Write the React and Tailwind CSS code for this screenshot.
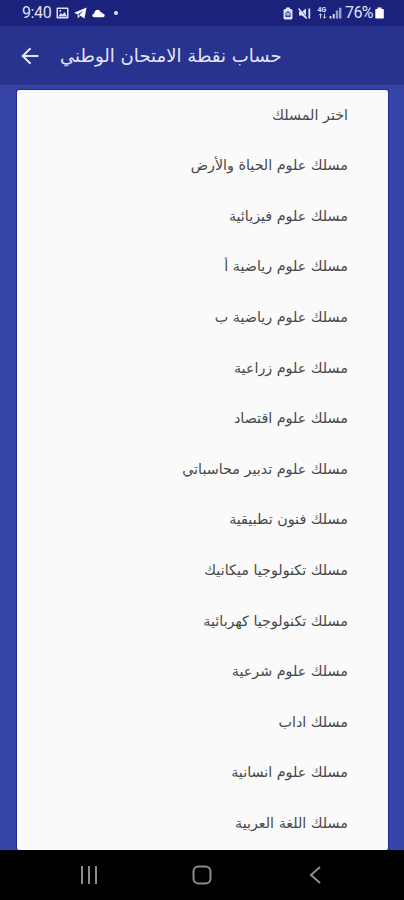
const TRACKS = [
  "اختر المسلك",
  "مسلك علوم الحياة والأرض",
  "مسلك علوم فيزيائية",
  "مسلك علوم رياضية أ",
  "مسلك علوم رياضية ب",
  "مسلك علوم زراعية",
  "مسلك علوم اقتصاد",
  "مسلك علوم تدبير محاسباتي",
  "مسلك فنون تطبيقية",
  "مسلك تكنولوجيا ميكانيك",
  "مسلك تكنولوجيا كهربائية",
  "مسلك علوم شرعية",
  "مسلك اداب",
  "مسلك علوم انسانية",
  "مسلك اللغة العربية",
];

function StatusBar() {
  return (
    <div className="flex h-[26px] shrink-0 items-center bg-[#1a227c] pl-[22px] pr-[20px] font-[Roboto,sans-serif] text-[#dfe2f5]">
      <span className="w-[34px] text-[16px] leading-[26px] tracking-[-0.4px]">9:40</span>
      <svg className="h-[12px] w-[13px]" viewBox="0 0 13 12">
        <path fillRule="evenodd" fill="currentColor" d="M1.5 0.5h10q1 0 1 1v9q0 1-1 1h-10q-1 0-1-1v-9q0-1 1-1zM2 2v8h9V2z" />
        <path d="M2.2 9.4 4.8 6l1.7 1.6 2-2.5 2.5 4.3zM3.5 3.1h1.6v1.6H3.5z" fill="currentColor" />
      </svg>
      <svg className="ml-[5px] h-[12px] w-[13px]" viewBox="0 0 13 12">
        <path d="M12.6 0.6 0.2 5.8l3.5 1.7L9.8 3.4 5.2 8l5.2 3.5z" fill="#fff" />
        <path d="M3.7 7.2v4L6 8.9" fill="#fff" />
      </svg>
      <svg className="ml-[5px] h-[9px] w-[13px]" viewBox="0 0 13 9">
        <path d="M2.4 8.2Q.2 8.2.2 6.4q0-1.7 2-2Q2.8.8 5.6.8q2.3 0 3 2.4 1.5-.1 1.9 1.3 2.2.1 2.2 1.9T10.8 8.2z" fill="#fff" />
      </svg>
      <span className="ml-[9px] h-1 w-1 rounded-full bg-[#dfe2f5]" />

      <svg className="ml-auto h-[13px] w-[10px]" viewBox="0 0 10 13">
        <path fillRule="evenodd" d="M3 .5h4V2h1q1.5 0 1.5 1.5V11q0 1.500-1.500 1.500H2Q.5 12.500.5 11V3.500Q.5 2 2 2h1zM5 4 2.500 6.200v3.900h5V6.200z" fill="currentColor" />
        <path d="M3.300 7.200 5 5.700l1.700 1.500zM3.500 8.700h3" stroke="currentColor" fill="currentColor" strokeWidth=".8" />
      </svg>
      <svg className="ml-[5px] h-[13px] w-[13px]" viewBox="0 0 13 13">
        <path d="M1 4.500h3L8 1.500v10L4 8.500H1z" fill="currentColor" />
        <path d="M1.500 1l7 9" stroke="#1a227c" strokeWidth=".9" />
        <path d="M.5 1.500l8.200 10" stroke="currentColor" strokeWidth="1.400" />
        <path d="M11.300 1.500v10" stroke="currentColor" strokeWidth="1.800" />
      </svg>
      <div className="ml-[6px] flex w-[10px] flex-col items-center">
        <span className="text-[7px] font-bold leading-[6px]">4G</span>
        <svg className="h-[6px] w-[9px]" viewBox="0 0 9 6">
          <path d="M2.500 5.500V.8M1 2.300 2.500.8 4 2.300M6.500.5v4.700M5 3.700l1.500 1.500L8 3.700" fill="none" stroke="currentColor" strokeWidth=".9" />
        </svg>
      </div>
      <svg className="ml-[2px] h-[12px] w-[13px]" viewBox="0 0 13 12">
        <path d="M1.500 9v2.500M4.700 7v4.500" stroke="currentColor" strokeWidth="1.800" />
        <path d="M8 3.500v8M11.200.8v10.700" stroke="currentColor" strokeWidth="2.400" opacity=".65" />
      </svg>
      <span className="ml-[3px] w-[30px] whitespace-nowrap text-[16px] leading-[26px] tracking-[-0.6px]">76%</span>
      <svg className="h-[12px] w-[9px]" viewBox="0 0 9 12">
        <path d="M2.500.5h4V2h1.700q.6 0 .6.700v8q0 .8-.7.800H1q-.7 0-.7-.8v-8Q.3 2 1 2h1.500z" fill="#fff" />
      </svg>
    </div>
  );
}

function AppBar() {
  return (
    <header className="flex h-[59px] shrink-0 items-center bg-[#28328f] pl-[21px] text-[#e3e5f5]">
      <svg className="h-[18px] w-[19px]" viewBox="0 0 19 18" fill="none" stroke="currentColor" strokeWidth="2">
        <path d="M17.500 9H2M9.500 1.200 1.700 9l7.800 7.800" />
      </svg>
      <h1 dir="rtl" className="ml-[20px] whitespace-nowrap font-['DejaVu_Sans',sans-serif] text-[18.100px] leading-[30px]">
        حساب نقطة الامتحان الوطني
      </h1>
    </header>
  );
}

function NavBar() {
  return (
    <nav className="flex h-[50px] shrink-0 items-center bg-black text-[#8c8c8c]">
      <svg className="ml-[80px] h-[18px] w-[18px]" viewBox="0 0 18 18" stroke="currentColor" strokeWidth="2">
        <path d="M2 0v18M9 0v18M16 0v18" />
      </svg>
      <svg className="ml-[94px] h-[20px] w-[20px]" viewBox="0 0 20 20" fill="none" stroke="currentColor" strokeWidth="2">
        <rect x="1.500" y="1.500" width="17" height="17" rx="5" />
      </svg>
      <svg className="ml-[97px] h-[18px] w-[12px]" viewBox="0 0 12 18" fill="none" stroke="currentColor" strokeWidth="2">
        <path d="M11 1 2 9l9 8" />
      </svg>
    </nav>
  );
}

export default function App() {
  return (
    <div className="flex h-[900px] w-[404px] flex-col overflow-hidden bg-[#3644a5]">
      <StatusBar />
      <AppBar />
      <main className="flex-1 pl-[17px] pr-[16px] pt-[5px]">
        <ul
          dir="rtl"
          className="h-full rounded-[2px] bg-[#fafafa] pr-[40px] font-['DejaVu_Sans',sans-serif] text-[14.3px] text-[#484848] shadow-[0_0_0_1px_#1c289c]"
        >
          {TRACKS.map((track) => (
            <li key={track} className="flex h-[50.6px] items-center whitespace-nowrap">
              {track}
            </li>
          ))}
        </ul>
      </main>
      <NavBar />
    </div>
  );
}
